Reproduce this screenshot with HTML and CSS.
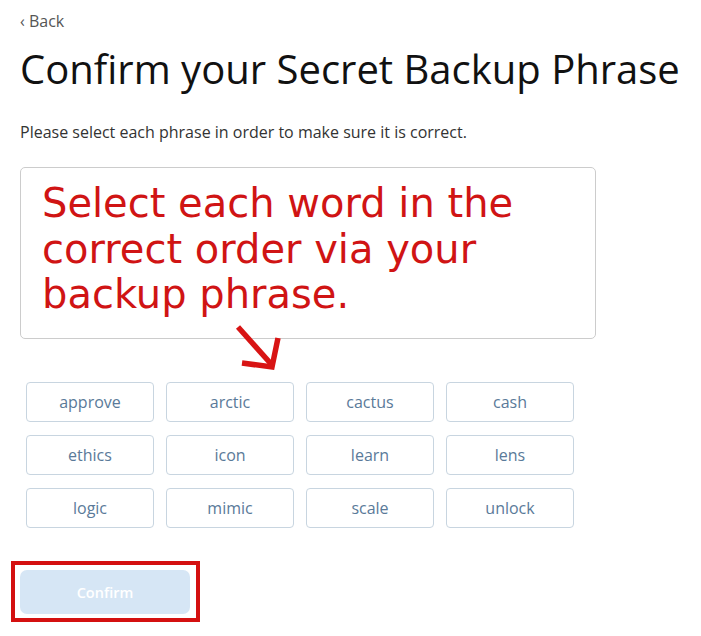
FILE: index.html
```html
<!DOCTYPE html>
<html>
<head>
<meta charset="utf-8">
<link rel="stylesheet" href="styles.css">
</head>
<body>
<div class="page">
  <a class="back">&lsaquo; Back</a>
  <h1 class="title">Confirm your Secret Backup Phrase</h1>
  <p class="sub">Please select each phrase in order to make sure it is correct.</p>
  <div class="box">
    <div class="note">Select each word in the correct order via your backup phrase.</div>
    <svg class="arrow" width="50" height="50" viewBox="0 0 50 50">
      <path d="M3 2 L37 40" stroke="#d81414" stroke-width="5.5" fill="none"/>
      <path d="M7 38 L37 42 L43 13" stroke="#d81414" stroke-width="5.5" fill="none" stroke-linejoin="miter"/>
    </svg>
  </div>
  <div class="words">
    <div class="word">approve</div>
    <div class="word">arctic</div>
    <div class="word">cactus</div>
    <div class="word">cash</div>
    <div class="word">ethics</div>
    <div class="word">icon</div>
    <div class="word">learn</div>
    <div class="word">lens</div>
    <div class="word">logic</div>
    <div class="word">mimic</div>
    <div class="word">scale</div>
    <div class="word">unlock</div>
  </div>
  <div class="confirm-wrap">
    <button class="confirm">Confirm</button>
  </div>
</div>
</body>
</html>
```
FILE: styles.css
```css
html, body {
  margin: 0;
  padding: 0;
  background: #ffffff;
}
.page {
  padding: 0 20px;
  font-family: "Open Sans", Lato, sans-serif;
}
.back {
  display: block;
  padding-top: 11px;
  height: 20px;
  line-height: 20px;
  font-size: 16px;
  color: #555555;
}
.title {
  margin: 15px 0 0 0;
  font-size: 40px;
  line-height: 46px;
  font-weight: 400;
  color: #111111;
  letter-spacing: 0;
}
.sub {
  margin: 30px 0 0 0;
  font-size: 16px;
  line-height: 20px;
  color: #333333;
}
.box {
  position: relative;
  margin-top: 25px;
  width: 553px;
  height: 157px;
  border: 1px solid #cccccc;
  border-radius: 5px;
  padding: 13px 0 0 21px;
  box-sizing: content-box;
}
.note {
  font-family: "DejaVu Sans", Verdana, sans-serif;
  font-size: 40px;
  line-height: 45.5px;
  color: #d01414;
  width: 530px;
}
.arrow {
  position: absolute;
  left: 214px;
  top: 157px;
}
.words {
  margin: 43px 0 0 6px;
  display: grid;
  grid-template-columns: repeat(4, 128px);
  column-gap: 12px;
  row-gap: 13px;
}
.word {
  height: 40px;
  box-sizing: border-box;
  border: 1px solid #c8d5e0;
  border-radius: 4px;
  display: flex;
  align-items: center;
  justify-content: center;
  font-size: 16px;
  color: #5a7a99;
}
.confirm-wrap {
  margin: 33px 0 0 -9px;
  width: 170px;
  height: 44px;
  border: 4px solid #d41010;
  padding: 5px 6px 4px 5px;
  box-sizing: content-box;
}
.confirm {
  display: block;
  width: 170px;
  height: 44px;
  border: none;
  border-radius: 7px;
  background: #d6e6f5;
  color: #ffffff;
  font-family: "Open Sans", "Liberation Sans", sans-serif;
  font-size: 14.5px;
  font-weight: 600;
}
```
